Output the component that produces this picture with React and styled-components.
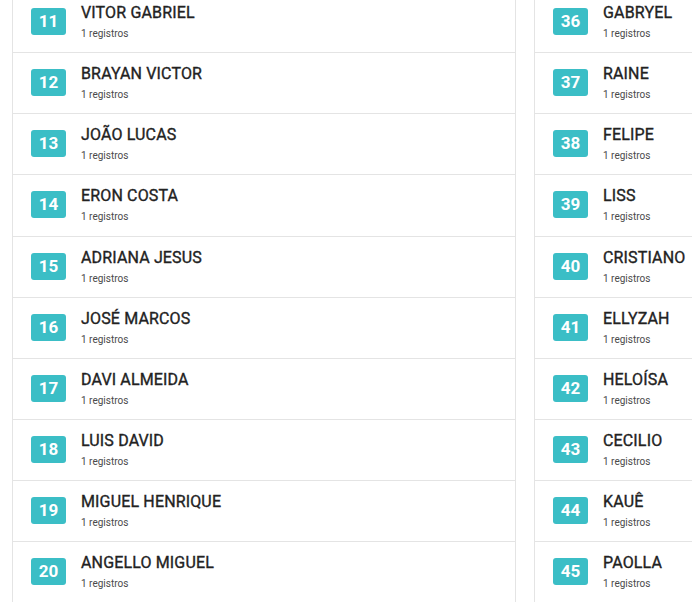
import React from "react";
import styled, { createGlobalStyle } from "styled-components";

const Global = createGlobalStyle`
  html, body { margin: 0; padding: 0; background: #fff; overflow: hidden; }
  body { font-family: Roboto, "Noto Sans", Arial, sans-serif; }
`;

const Page = styled.div`
  display: flex;
  gap: 18px;
  padding-left: 12px;
  margin-top: -8px;
  width: 1100px;
`;

const Card = styled.div`
  width: 502px;
  flex: none;
  border-left: 1px solid #e4e4e4;
  border-right: 1px solid #e4e4e4;
  background: #fff;
`;

const Row = styled.div`
  display: flex;
  align-items: flex-start;
  box-sizing: border-box;
  height: 61.125px;
  padding: 11px 18px 0;
  border-bottom: 1px solid #e4e4e4;
`;

const Badge = styled.div`
  width: 35px;
  height: 27px;
  margin-top: 5px;
  border-radius: 3px;
  background: #3bbec6;
  color: #fff;
  font-weight: 700;
  font-size: 17px;
  line-height: 27px;
  text-align: center;
  flex: none;
`;

const Info = styled.div`
  margin-left: 15px;
  display: flex;
  flex-direction: column;
`;

const Name = styled.div`
  font-size: 16px;
  font-weight: 400;
  letter-spacing: 0.15px;
  -webkit-text-stroke: 0.35px #222;
  line-height: 20px;
  color: #222;
  white-space: nowrap;
`;

const Sub = styled.div`
  margin-top: 5px;
  font-size: 10px;
  line-height: 12px;
  color: #4a4a4a;
`;

const left = [
  [11, "VITOR GABRIEL"],
  [12, "BRAYAN VICTOR"],
  [13, "JOÃO LUCAS"],
  [14, "ERON COSTA"],
  [15, "ADRIANA JESUS"],
  [16, "JOSÉ MARCOS"],
  [17, "DAVI ALMEIDA"],
  [18, "LUIS DAVID"],
  [19, "MIGUEL HENRIQUE"],
  [20, "ANGELLO MIGUEL"],
];

const right = [
  [36, "GABRYEL"],
  [37, "RAINE"],
  [38, "FELIPE"],
  [39, "LISS"],
  [40, "CRISTIANO"],
  [41, "ELLYZAH"],
  [42, "HELOÍSA"],
  [43, "CECILIO"],
  [44, "KAUÊ"],
  [45, "PAOLLA"],
];

function List({ items }) {
  return (
    <Card>
      {items.map(([n, name]) => (
        <Row key={n}>
          <Badge>{n}</Badge>
          <Info>
            <Name>{name}</Name>
            <Sub>1 registros</Sub>
          </Info>
        </Row>
      ))}
    </Card>
  );
}

export default function App() {
  return (
    <>
      <Global />
      <Page>
        <List items={left} />
        <List items={right} />
      </Page>
    </>
  );
}
